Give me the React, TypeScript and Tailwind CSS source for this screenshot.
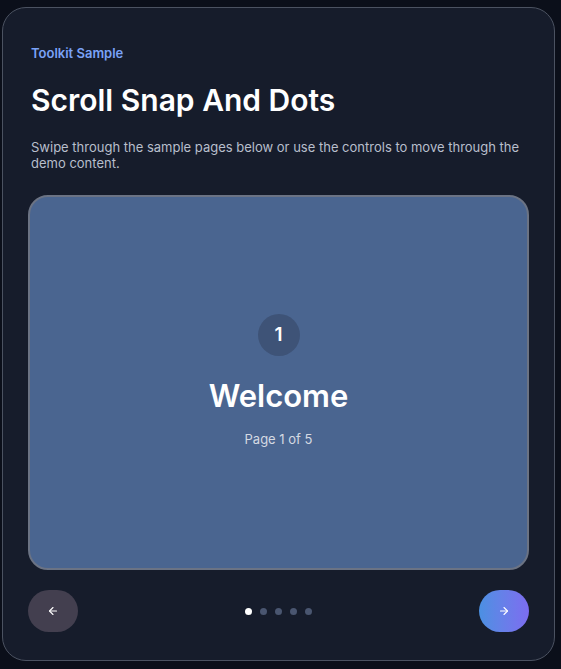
import { useState } from "react";

const pages = [
  { title: "Welcome" },
  { title: "Features" },
  { title: "Layout" },
  { title: "Controls" },
  { title: "Finish" },
];

export default function App() {
  const [index, setIndex] = useState(0);
  const page = pages[index];

  return (
    <div className="min-h-screen bg-[#0b0f1a] pt-[7px] pl-[2px] font-['Inter',sans-serif]">
      <div className="w-[553px] h-[654px] rounded-[24px] border border-[#4b5261] bg-[#161c2b] px-[25px] pt-[35px] pb-[28px] flex flex-col">
        {/* Header */}
        <div className="px-[3px]">
          <p className="text-[13px] font-semibold leading-[20px] text-[#7aa2f7]">Toolkit Sample</p>
          <h1 className="mt-[19px] text-[30px] font-semibold leading-[36px] text-white">Scroll Snap And Dots</h1>
          <p className="mt-[21px] text-[13px] leading-[16px] text-[#b8bfcc]">
            Swipe through the sample pages below or use the controls to move through the demo content.
          </p>
        </div>

        {/* Slide */}
        <div className="mt-[24px] h-[375px] rounded-[20px] border-2 border-[#6b7384] bg-[#4a6590] flex flex-col items-center justify-center pb-[3px]">
          <div className="w-[42px] h-[42px] rounded-full bg-[#3e5377] flex items-center justify-center text-[19px] font-semibold text-white">
            {index + 1}
          </div>
          <h2 className="mt-[20px] text-[31px] font-semibold leading-[40px] text-white">{page.title}</h2>
          <p className="mt-[14px] text-[13px] leading-[18px] text-[#d4d9e2]">
            Page {index + 1} of {pages.length}
          </p>
        </div>

        {/* Controls */}
        <div className="mt-[20px] flex items-center justify-between">
          <button
            className="w-[50px] h-[42px] rounded-full bg-[#433f4f] flex items-center justify-center text-white"
            onClick={() => setIndex((i) => Math.max(0, i - 1))}
          >
            <svg width="12" height="12" viewBox="0 0 24 24" fill="none" stroke="currentColor" strokeWidth="2.2" strokeLinecap="round" strokeLinejoin="round">
              <path d="M19 12H5" />
              <path d="M12 19l-7-7 7-7" />
            </svg>
          </button>
          <div className="flex items-center gap-[8px]">
            {pages.map((p, i) => (
              <span
                key={p.title}
                className={`w-[7px] h-[7px] rounded-full ${i === index ? "bg-white" : "bg-[#4a5670]"}`}
              />
            ))}
          </div>
          <button
            className="w-[50px] h-[42px] rounded-full bg-gradient-to-r from-[#4a90e2] to-[#7c6cf0] flex items-center justify-center text-white"
            onClick={() => setIndex((i) => Math.min(pages.length - 1, i + 1))}
          >
            <svg width="12" height="12" viewBox="0 0 24 24" fill="none" stroke="currentColor" strokeWidth="2.2" strokeLinecap="round" strokeLinejoin="round">
              <path d="M5 12h14" />
              <path d="M12 5l7 7-7 7" />
            </svg>
          </button>
        </div>
      </div>
    </div>
  );
}
